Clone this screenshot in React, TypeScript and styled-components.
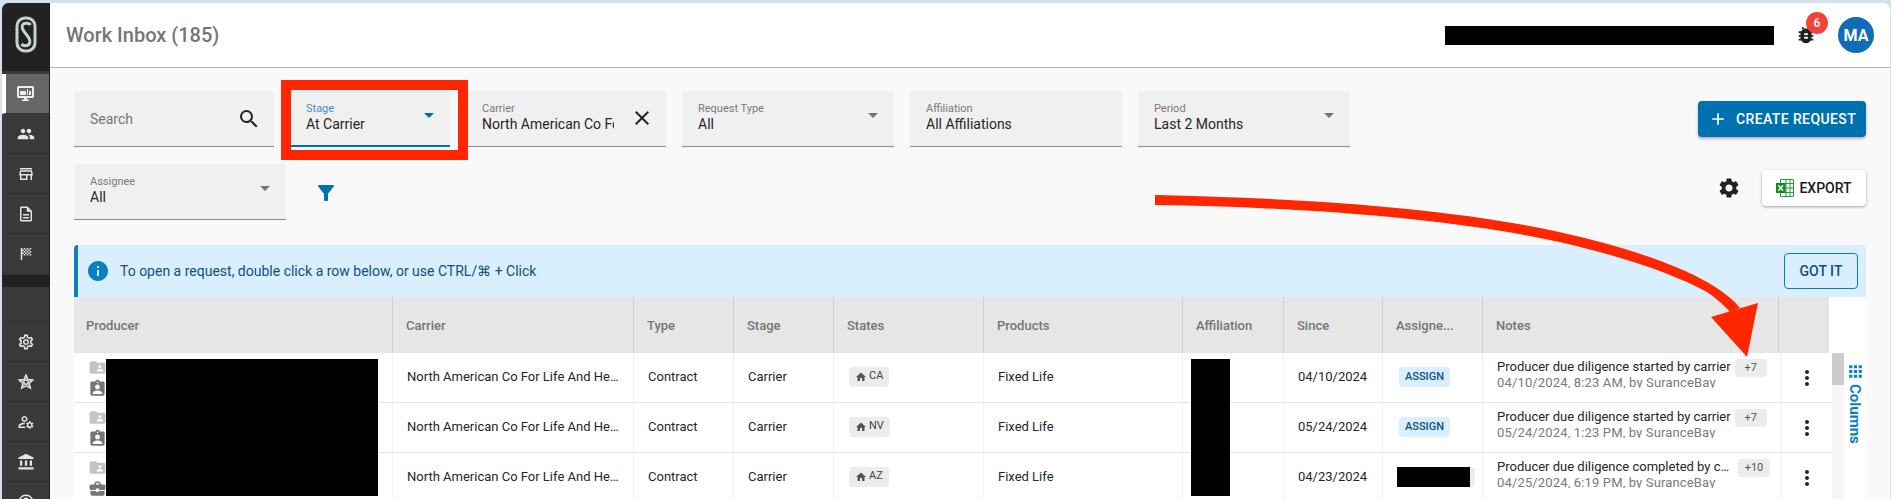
import React from 'react';
import styled, { createGlobalStyle } from 'styled-components';
import {
  MdPeople, MdOutlineStore, MdOutlineDescription, MdSportsScore, MdOutlineSettings,
  MdOutlineManageAccounts, MdAccountBalance, MdHelpOutline, MdSearch, MdClose, MdFilterAlt,
  MdBugReport, MdSettings, MdAdd, MdApps, MdMoreVert, MdInfo, MdHome, MdFolderShared,
  MdAssignmentInd, MdBusinessCenter,
} from 'react-icons/md';

const BLUE = '#0071b0';
const COLS_HEAD = '319px 241px 100px 100px 150px 199px 101px 99px 100px 296px 50px';
const COLS_ROW = '319px 241px 100px 100px 150px 199px 101px 99px 100px 299px 50px';

const GlobalStyle = createGlobalStyle`
  html, body {
    margin: 0;
    height: 100%;
    overflow: hidden;
    background: #d4e2ee;
    font-family: Roboto, "Liberation Sans", sans-serif;
  }
  * { box-sizing: border-box; }
`;

const Shell = styled.div`
  display: flex;
  height: 100vh;
  padding: 3px 1px 0 2px;
  position: relative;
  overflow: hidden;
`;

const Sidebar = styled.aside`
  width: 48px;
  flex: none;
  display: flex;
  flex-direction: column;
  background: #3a3a3a;
  border-right: 1px solid #1d1d1d;
  border-top-left-radius: 7px;
  overflow: hidden;
`;

const LogoBlock = styled.div`
  height: 68px;
  margin-bottom: 3px;
  background: #222222;
  display: flex;
  align-items: center;
  justify-content: center;
  flex: none;
  padding-bottom: 5px;
`;

const NavItem = styled.div<{ $active?: boolean }>`
  height: 40px;
  flex: none;
  display: flex;
  align-items: center;
  justify-content: center;
  color: #e4e4e4;
  font-size: 18px;
  border-bottom: 1px solid #333333;
  background: ${(p) => (p.$active ? '#666666' : 'transparent')};
  border-left: 4px solid ${(p) => (p.$active ? '#ffffff' : 'transparent')};
  padding-right: 4px;
`;

const NavBand = styled.div`
  height: 12px;
  margin-top: 1px;
  background: #222222;
  flex: none;
`;

const NavSpacer = styled.div`
  height: 35px;
  flex: none;
  border-bottom: 1px solid #363636;
`;

const Content = styled.div`
  flex: 1;
  min-width: 0;
  display: flex;
  flex-direction: column;
`;

const Header = styled.header`
  height: 65px;
  flex: none;
  background: #ffffff;
  border-bottom: 1px solid #b5b5b5;
  border-top-right-radius: 7px;
  display: flex;
  align-items: center;
  justify-content: space-between;
  padding: 0 16px;
`;

const Title = styled.h1`
  margin: 0 0 1px;
  font-size: 20px;
  font-weight: 500;
  color: #757575;
`;

const HeaderRight = styled.div`
  display: flex;
  align-items: center;
`;

const Redacted = styled.div`
  width: 329px;
  height: 19px;
  background: #000000;
  margin-right: 19px;
`;

const BugWrap = styled.div`
  position: relative;
  width: 26px;
  height: 26px;
  display: flex;
  align-items: center;
  justify-content: center;
  font-size: 22px;
  color: #212121;
  margin-right: 19px;
`;

const Badge = styled.span`
  position: absolute;
  top: -10px;
  left: 13px;
  width: 22px;
  height: 22px;
  border-radius: 50%;
  background: #f44336;
  color: #ffffff;
  font-size: 12px;
  font-weight: 500;
  display: flex;
  align-items: center;
  justify-content: center;
`;

const Avatar = styled.div`
  width: 36px;
  height: 36px;
  border-radius: 50%;
  background: #0f6cb6;
  color: #ffffff;
  font-size: 16px;
  font-weight: 700;
  display: flex;
  align-items: center;
  justify-content: center;
`;

const Main = styled.main`
  flex: 1;
  min-height: 0;
  background: #f9f9f9;
  padding: 23px 24px 0;
  overflow: hidden;
`;

const FilterRow = styled.div<{ $mb: number }>`
  display: flex;
  align-items: flex-start;
  justify-content: space-between;
  margin-bottom: ${(p) => p.$mb}px;
`;

const Fields = styled.div`
  display: flex;
  gap: 16px;
`;

const Field = styled.div<{ $width: number; $focused?: boolean }>`
  position: relative;
  width: ${(p) => p.$width}px;
  height: 56px;
  background: #f0f0f0;
  border-radius: 4px 4px 0 0;
  border-bottom: ${(p) => (p.$focused ? `2px solid ${BLUE}` : '1px solid #8c8c8c')};
  padding: 9px 16px 0;
`;

const FieldLabel = styled.div<{ $focused?: boolean }>`
  font-size: 11px;
  line-height: 14px;
  margin-top: 2px;
  color: ${(p) => (p.$focused ? '#3f93c6' : '#7a7a7a')};
`;

const FieldValue = styled.div<{ $clip?: number }>`
  font-size: 14px;
  line-height: 17px;
  color: #262626;
  white-space: nowrap;
  overflow: hidden;
  ${(p) => (p.$clip ? `width: ${p.$clip}px;` : '')}
`;

const SearchBody = styled.div`
  height: 55px;
  display: flex;
  align-items: center;
  justify-content: space-between;
  font-size: 14px;
  color: #757575;
  margin: -9px -16px 0 0;
  padding: 1px 13px 0 0;
`;

const Caret = styled.span<{ $focused?: boolean }>`
  position: absolute;
  right: 16px;
  top: 22px;
  width: 0;
  height: 0;
  border-left: 5px solid transparent;
  border-right: 5px solid transparent;
  border-top: 5px solid ${(p) => (p.$focused ? BLUE : '#757575')};
`;

const ClearIcon = styled.span`
  position: absolute;
  right: 12px;
  top: 15px;
  font-size: 24px;
  line-height: 0;
  color: #262626;
`;

const PrimaryButton = styled.button`
  width: 168px;
  height: 36px;
  margin-top: 10px;
  border: none;
  border-radius: 4px;
  background: ${BLUE};
  color: #ffffff;
  font: 500 14px Roboto, sans-serif;
  letter-spacing: 0.4px;
  display: flex;
  align-items: center;
  justify-content: center;
  gap: 8px;
  box-shadow: 0 2px 3px rgba(0, 0, 0, 0.28);
`;

const FilterButton = styled.span`
  font-size: 24px;
  line-height: 0;
  color: ${BLUE};
  margin: 17px 0 0 12px;
`;

const RightTools = styled.div`
  display: flex;
  align-items: center;
  margin-top: 6px;
`;

const GearButton = styled.span`
  font-size: 24px;
  line-height: 0;
  color: #212121;
  margin-right: 21px;
`;

const ExportButton = styled.button`
  width: 104px;
  height: 36px;
  border: none;
  border-radius: 4px;
  background: #ffffff;
  color: #1a1a1a;
  font: 500 14px Roboto, sans-serif;
  display: flex;
  align-items: center;
  justify-content: center;
  gap: 5px;
  box-shadow: 0 1px 3px rgba(0, 0, 0, 0.35);
`;

const Banner = styled.div`
  height: 52px;
  display: flex;
  align-items: center;
  background: #d9effe;
  border-left: 4px solid #0a7fc4;
  border-radius: 4px 4px 0 0;
  padding: 0 8px;
  color: #0e4f7e;
  font-size: 14px;
`;

const BannerIcon = styled.span`
  font-size: 24px;
  line-height: 0;
  color: #0a7fc4;
  margin-right: 10px;
`;

const GotIt = styled.button`
  margin-left: auto;
  width: 74px;
  height: 36px;
  background: transparent;
  border: 1px solid #0a7fc4;
  border-radius: 4px;
  color: #0e4f7e;
  font: 500 14px Roboto, sans-serif;
`;

const TableWrap = styled.div`
  display: flex;
  background: #ffffff;
`;

const TableArea = styled.div`
  width: 1770px;
  flex: none;
  position: relative;
`;

const HeadRow = styled.div`
  width: 1755px;
  height: 56px;
  display: grid;
  grid-template-columns: ${COLS_HEAD};
  background: #e6e6e6;
`;

const HeadCell = styled.div`
  display: flex;
  align-items: center;
  padding: 0 12px 0 13px;
  font-size: 13px;
  font-weight: 500;
  color: #757575;
  border-right: 1px solid #cfcfcf;
  &:first-child { padding-left: 12px; }
  &:last-child { border-right: none; }
`;

const Body = styled.div`
  position: relative;
  display: flex;
`;

const Rows = styled.div`
  width: 1758px;
  flex: none;
`;

const Row = styled.div`
  height: 50px;
  display: grid;
  grid-template-columns: ${COLS_ROW};
  border-bottom: 1px solid #e4e4e4;
`;

const Cell = styled.div`
  display: flex;
  align-items: center;
  padding: 0 14px 2px;
  font-size: 13px;
  color: #262626;
  border-right: 1px solid #f0f0f0;
  white-space: nowrap;
  overflow: hidden;
  min-width: 0;
  &:last-child { border-right: none; }
`;

const ProducerCell = styled(Cell)`
  padding: 5px 0 0 14px;
  flex-direction: column;
  align-items: flex-start;
  font-size: 17px;
  gap: 2px;
`;

const ProducerIcon = styled.span<{ $light?: boolean }>`
  line-height: 0;
  font-size: 19px;
  color: ${(p) => (p.$light ? '#c4c4c4' : '#757575')};
`;

const Ellipsis = styled.span`
  overflow: hidden;
  text-overflow: ellipsis;
`;

const Chip = styled.span<{ $blue?: boolean }>`
  height: 20px;
  display: inline-flex;
  align-items: center;
  gap: 2px;
  padding: 0 6px;
  border-radius: 4px;
  font-size: 11px;
  font-weight: ${(p) => (p.$blue ? 500 : 400)};
  color: ${(p) => (p.$blue ? '#0e4f7e' : '#424242')};
  background: ${(p) => (p.$blue ? '#d9effe' : '#ececec')};
`;

const StateChip = styled(Chip)`
  margin: 0 0 0 1px;
  padding-bottom: 2px;
`;

const AssignChip = styled(Chip)`
  margin: 0 0 0 2px;
`;

const MaskedChip = styled(Chip)`
  width: 78px;
  padding: 0 5px 0 0;
  &::before {
    content: '';
    display: block;
    width: 73px;
    height: 20px;
    background: #000000;
  }
`;

const ChipGlyph = styled.span`
  font-size: 12px;
  line-height: 0;
  margin-top: 2px;
  color: #555555;
`;

const NoteCell = styled(Cell)`
  display: block;
  padding: 6px 0 0 14px;
`;

const NoteClip = styled.div`
  height: 29px;
  overflow: hidden;
`;

const NoteTop = styled.div`
  display: flex;
  align-items: flex-start;
  height: 16px;
  line-height: 16px;
  color: #262626;
`;

const NoteText = styled(Ellipsis)`
  max-width: 237px;
`;

const CountChip = styled.span`
  flex: none;
  width: 32px;
  height: 18px;
  margin-left: 4px;
  border-radius: 4px;
  background: #ececec;
  color: #555555;
  font-size: 11px;
  line-height: 18px;
  text-align: center;
`;

const NoteSub = styled.div`
  font-size: 13px;
  line-height: 16px;
  letter-spacing: 0.15px;
  color: #7a7a7a;
`;

const ActionCell = styled(Cell)`
  justify-content: center;
  font-size: 24px;
  padding: 0;
  color: #262626;
`;

const ScrollTrack = styled.div`
  width: 12px;
  flex: none;
  background: #f6f6f6;
`;

const ScrollThumb = styled.div`
  height: 32px;
  background: #cccccc;
`;

const ColumnsPanel = styled.div`
  width: 22px;
  flex: none;
  padding-top: 65px;
  display: flex;
  flex-direction: column;
  align-items: center;
  color: #0a7fc4;
  font-size: 19px;
`;

const ColumnsLabel = styled.span`
  writing-mode: vertical-rl;
  font-size: 15px;
  font-weight: 700;
  margin-top: 3px;
`;

const Mask = styled.div<{ $left: number; $width: number }>`
  position: absolute;
  top: 6px;
  left: ${(p) => p.$left}px;
  width: ${(p) => p.$width}px;
  height: 137px;
  background: #000000;
`;

const Highlight = styled.div`
  position: absolute;
  left: 281px;
  top: 80px;
  width: 187px;
  height: 80px;
  border: 10px solid #ff2600;
  pointer-events: none;
`;

const ArrowLayer = styled.svg`
  position: absolute;
  left: 0;
  top: 0;
  pointer-events: none;
`;

const Logo = () => (
  <svg width="22" height="37" viewBox="0 0 22 37" fill="none" stroke="#c8d0d0">
    <rect x="2" y="2" width="18" height="33" rx="8" strokeWidth="3" />
    <path d="M15.500 9c-1-2-6.500-2.500-8 0s.5 5.500 3.500 9 5 6.500 3.500 9.500-6.500 2.500-8 .5" strokeWidth="3" />
  </svg>
);

const MonitorIcon = () => (
  <svg width="17" height="16" viewBox="0 0 17 16" fill="#ececec">
    <path d="M1.5 0h14A1.5 1.5 0 0 1 17 1.5v9a1.5 1.5 0 0 1-1.5 1.5H10v1.5h2V15H5v-1.5h2V12H1.5A1.5 1.5 0 0 1 0 10.500v-9A1.500 1.500 0 0 1 1.500 0zM2 2v8h13V2zM3 5h6v4H3zm7-2h1v6h-1zm2 2h2v4h-2z" fillRule="evenodd" />
  </svg>
);

const StarIcon = () => (
  <svg width="16" height="16" viewBox="0 0 16 16" fill="none" stroke="#ececec" strokeWidth="1.3">
    <path d="M8 1l2 4.500 5 .5-3.700 3.300 1.100 5L8 11.700 3.600 14.300l1.100-5L1 6l5-.5z" />
    <circle cx="8" cy="8" r="2.200" />
    <path d="M8 1v4.800M1 6l5 1.500M15 6l-5 1.500M3.600 14.300l3-4.600M12.400 14.300l-3-4.600" strokeWidth="0.9" />
  </svg>
);

const ExcelIcon = () => (
  <svg width="18" height="18" viewBox="0 0 18 18">
    <path d="M4.500.5h13v17h-13z" fill="#ffffff" stroke="#23a03c" />
    <path d="M4.500 4.500h13M4.500 9h13M4.500 13.500h13M10 .5v17M14 .5v17" stroke="#23a03c" fill="none" />
    <rect x="0" y="4" width="9.500" height="10" fill="#0f8a1f" />
    <path d="M2.300 6.200l4.800 5.600M7.100 6.200l-4.800 5.600" stroke="#ffffff" strokeWidth="1.400" />
  </svg>
);

const Arrow = () => (
  <ArrowLayer width="1891" height="499" viewBox="0 0 1891 499">
    <path
      d="M1155 195C1300 198 1440 208 1540 228C1610 242 1672 262 1707 282C1722 291 1733 299 1740 308L1730 312C1724 305 1716 298 1707 292C1670 272 1610 252 1540 238C1440 218 1300 207 1155 205Z"
      fill="#ff2600"
    />
    <path d="M1711 317L1758 303L1747 357Z" fill="#ff2600" />
  </ArrowLayer>
);

const headers = ['Producer', 'Carrier', 'Type', 'Stage', 'States', 'Products', 'Affiliation', 'Since', 'Assigne...', 'Notes', ''];

type RowData = {
  state: string;
  since: string;
  note: string;
  when: string;
  count: string;
  assigned?: boolean;
  briefcase?: boolean;
};

const rows: RowData[] = [
  { state: 'CA', since: '04/10/2024', note: 'Producer due diligence started by carrier', when: '04/10/2024, 8:23 AM, by SuranceBay', count: '+7' },
  { state: 'NV', since: '05/24/2024', note: 'Producer due diligence started by carrier', when: '05/24/2024, 1:23 PM, by SuranceBay', count: '+7' },
  { state: 'AZ', since: '04/23/2024', note: 'Producer due diligence completed by carrier', when: '04/25/2024, 6:19 PM, by SuranceBay', count: '+10', assigned: true, briefcase: true },
];

const App = (): JSX.Element => (
  <>
    <GlobalStyle />
    <Shell>
      <Sidebar>
        <LogoBlock><Logo /></LogoBlock>
        <NavItem $active><MonitorIcon /></NavItem>
        <NavItem><MdPeople /></NavItem>
        <NavItem><MdOutlineStore /></NavItem>
        <NavItem><MdOutlineDescription /></NavItem>
        <NavItem><MdSportsScore /></NavItem>
        <NavBand />
        <NavSpacer />
        <NavItem><MdOutlineSettings /></NavItem>
        <NavItem><StarIcon /></NavItem>
        <NavItem><MdOutlineManageAccounts /></NavItem>
        <NavItem><MdAccountBalance /></NavItem>
        <NavItem><MdHelpOutline /></NavItem>
      </Sidebar>
      <Content>
        <Header>
          <Title>Work Inbox (185)</Title>
          <HeaderRight>
            <Redacted />
            <BugWrap>
              <MdBugReport />
              <Badge>6</Badge>
            </BugWrap>
            <Avatar>MA</Avatar>
          </HeaderRight>
        </Header>
        <Main>
          <FilterRow $mb={17}>
            <Fields>
              <Field $width={200}>
                <SearchBody>Search<MdSearch size={24} color="#212121" /></SearchBody>
              </Field>
              <Field $width={160} $focused>
                <FieldLabel $focused>Stage</FieldLabel>
                <FieldValue>At Carrier</FieldValue>
                <Caret $focused />
              </Field>
              <Field $width={200}>
                <FieldLabel>Carrier</FieldLabel>
                <FieldValue $clip={132}>North American Co For Life And Health</FieldValue>
                <ClearIcon><MdClose /></ClearIcon>
              </Field>
              <Field $width={212}>
                <FieldLabel>Request Type</FieldLabel>
                <FieldValue>All</FieldValue>
                <Caret />
              </Field>
              <Field $width={212}>
                <FieldLabel>Affiliation</FieldLabel>
                <FieldValue>All Affiliations</FieldValue>
              </Field>
              <Field $width={212}>
                <FieldLabel>Period</FieldLabel>
                <FieldValue>Last 2 Months</FieldValue>
                <Caret />
              </Field>
            </Fields>
            <PrimaryButton><MdAdd size={20} />CREATE REQUEST</PrimaryButton>
          </FilterRow>
          <FilterRow $mb={25}>
            <Fields>
              <Field $width={212}>
                <FieldLabel>Assignee</FieldLabel>
                <FieldValue>All</FieldValue>
                <Caret />
              </Field>
              <FilterButton><MdFilterAlt /></FilterButton>
            </Fields>
            <RightTools>
              <GearButton><MdSettings /></GearButton>
              <ExportButton><ExcelIcon />EXPORT</ExportButton>
            </RightTools>
          </FilterRow>
          <Banner>
            <BannerIcon><MdInfo /></BannerIcon>
            To open a request, double click a row below, or use CTRL/⌘ + Click
            <GotIt>GOT IT</GotIt>
          </Banner>
          <TableWrap>
            <TableArea>
              <HeadRow>
                {headers.map((h, i) => <HeadCell key={i}>{h}</HeadCell>)}
              </HeadRow>
              <Body>
                <Rows>
                  {rows.map((r) => (
                    <Row key={r.state}>
                      <ProducerCell>
                        <ProducerIcon $light><MdFolderShared /></ProducerIcon>
                        <ProducerIcon>{r.briefcase ? <MdBusinessCenter /> : <MdAssignmentInd />}</ProducerIcon>
                      </ProducerCell>
                      <Cell><Ellipsis>North American Co For Life And Health Ins</Ellipsis></Cell>
                      <Cell>Contract</Cell>
                      <Cell>Carrier</Cell>
                      <Cell><StateChip><ChipGlyph><MdHome /></ChipGlyph>{r.state}</StateChip></Cell>
                      <Cell>Fixed Life</Cell>
                      <Cell />
                      <Cell>{r.since}</Cell>
                      <Cell>{r.assigned ? <MaskedChip /> : <AssignChip $blue>ASSIGN</AssignChip>}</Cell>
                      <NoteCell>
                        <NoteClip>
                          <NoteTop>
                            <NoteText>{r.note}</NoteText>
                            <CountChip>{r.count}</CountChip>
                          </NoteTop>
                          <NoteSub>{r.when}</NoteSub>
                        </NoteClip>
                      </NoteCell>
                      <ActionCell><MdMoreVert /></ActionCell>
                    </Row>
                  ))}
                </Rows>
                <ScrollTrack><ScrollThumb /></ScrollTrack>
                <Mask $left={32} $width={272} />
                <Mask $left={1117} $width={39} />
              </Body>
            </TableArea>
            <ColumnsPanel>
              <MdApps />
              <ColumnsLabel>Columns</ColumnsLabel>
            </ColumnsPanel>
          </TableWrap>
        </Main>
      </Content>
      <Highlight />
      <Arrow />
    </Shell>
  </>
);

export default App;
